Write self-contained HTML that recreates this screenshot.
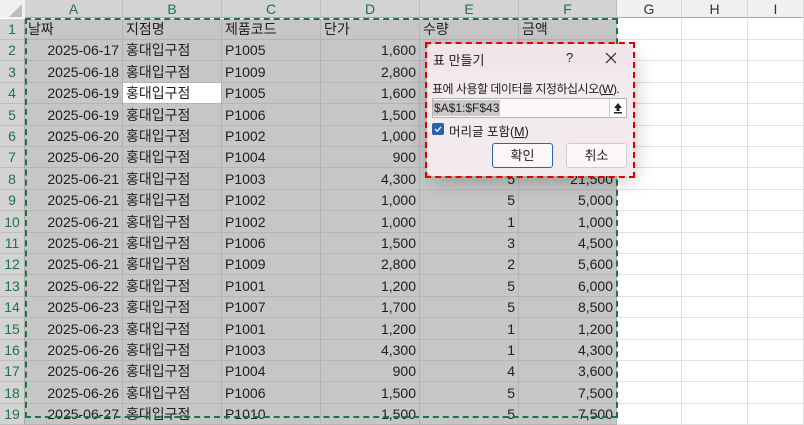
<!DOCTYPE html>
<html><head><meta charset="utf-8"><style>
*{margin:0;padding:0;box-sizing:border-box}
body{width:804px;height:413px;overflow:hidden;background:#fff;font-family:"Liberation Sans","Noto Sans CJK KR",sans-serif;font-size:14px;color:#1e1e1e;position:relative}
.c{position:absolute;white-space:nowrap;overflow:hidden;line-height:22px;padding:0 3px}
</style></head><body>
<div id="g"></div>
<div style="position:absolute;left:25px;top:18px;width:593px;height:400px;border:2px dashed #217346;"></div>
<div style="position:absolute;left:0;top:0;width:25px;height:18px;background:#f0f0f0"></div>
<svg style="position:absolute;left:6px;top:3px" width="18" height="15"><polygon points="16,1 16,14 3,14" fill="#bdbdbd"/></svg>

<div style="position:absolute;left:433px;top:50px;width:199px;height:122px;box-shadow:0 6px 22px rgba(0,0,0,.3);"></div>
<div style="position:absolute;left:425px;top:42px;width:210px;height:136px;border:2px dashed #e00000;"></div>
<div style="position:absolute;left:427px;top:44px;width:206px;height:132px;background:#f3eaed;border-radius:6px;overflow:hidden">
 <div style="position:absolute;left:0;top:0;width:206px;height:27px;background:#f1e4ea"></div>
 <div style="position:absolute;left:6px;top:6px;font-size:13px">표 만들기</div>
 <div style="position:absolute;left:139px;top:6px;font-size:13px">?</div>
 <svg style="position:absolute;left:178px;top:8px" width="12" height="12"><path d="M1 1L11 11M11 1L1 11" stroke="#222" stroke-width="1.2"/></svg>
 <div style="position:absolute;left:5px;top:36px;font-size:12px;letter-spacing:-.5px;white-space:nowrap">표에 사용할 데이터를 지정하십시오(<u>W</u>).</div>
 <div style="position:absolute;left:5px;top:54px;width:195px;height:20px;background:#fdf8f9;border:1px solid #b9b0b3"></div>
 <div style="position:absolute;left:6px;top:56px;height:16px;background:#c8c8c8;font-size:12px;line-height:16px;padding:0 1px;color:#222">$A$1:$F$43</div>
 <div style="position:absolute;left:182px;top:55px;width:17px;height:18px;background:#fff;border-left:1px solid #ccc"></div>
 <svg style="position:absolute;left:186px;top:58px" width="10" height="12"><path d="M5 1L1 6H3.5V9H6.5V6H9Z" fill="#222"/><rect x="1" y="10" width="8" height="1.5" fill="#222"/></svg>
 <div style="position:absolute;left:5px;top:79px;width:12px;height:12px;background:#2b5fb4;border-radius:2px"></div>
 <svg style="position:absolute;left:6px;top:80px" width="10" height="10"><path d="M2 5L4.2 7.3L8 2.8" stroke="#fff" stroke-width="1.3" fill="none"/></svg>
 <div style="position:absolute;left:22px;top:77px;font-size:12.5px">머리글 포함(<u>M</u>)</div>
 <div style="position:absolute;left:65px;top:99px;width:61px;height:25px;background:#fbf6f8;border:1px solid #2c62b8;border-radius:3px;text-align:center;line-height:23px;font-size:13px">확인</div>
 <div style="position:absolute;left:139px;top:99px;width:61px;height:25px;background:#fbf6f8;border:1px solid #d4cdd0;border-radius:3px;text-align:center;line-height:23px;font-size:13px">취소</div>
</div>

<script>
var g=document.getElementById('g');var h='';
var cx=[25,123,222,321,420,519,617,682,748,804];
var L='ABCDEFGHI';
for(var i=0;i<9;i++){var sel=i<6;h+='<div class="c" style="left:'+cx[i]+'px;top:0;width:'+(cx[i+1]-cx[i])+'px;height:18px;line-height:18px;text-align:center;background:'+(sel?'#d3d3d3':'#f0f0f0')+';color:'+(sel?'#217346':'#333')+';border-right:1px solid '+(sel?'#bdbdbd':'#d8d8d8')+';border-bottom:1px solid #aaa">'+L[i]+'</div>';}
var d=[["날짜","지점명","제품코드","단가","수량","금액"],
["2025-06-17","1005","1,600","4","6,400"],["2025-06-18","1009","2,800","1","2,800"],["2025-06-19","1005","1,600","2","3,200"],["2025-06-19","1006","1,500","3","4,500"],["2025-06-20","1002","1,000","2","2,000"],["2025-06-20","1004","900","3","2,700"],["2025-06-21","1003","4,300","5","21,500"],["2025-06-21","1002","1,000","5","5,000"],["2025-06-21","1002","1,000","1","1,000"],["2025-06-21","1006","1,500","3","4,500"],["2025-06-21","1009","2,800","2","5,600"],["2025-06-22","1001","1,200","5","6,000"],["2025-06-23","1007","1,700","5","8,500"],["2025-06-23","1001","1,200","1","1,200"],["2025-06-26","1003","4,300","1","4,300"],["2025-06-26","1004","900","4","3,600"],["2025-06-26","1006","1,500","5","7,500"],["2025-06-27","1010","1,500","5","7,500"]];
var rh=21.4,y0=18.5;
for(var r=0;r<19;r++){var y=Math.round(y0+r*rh),y2=Math.round(y0+(r+1)*rh),hh=y2-y;
h+='<div class="c" style="left:0;top:'+y+'px;width:25px;height:'+hh+'px;line-height:'+hh+'px;text-align:center;background:#d3d3d3;color:#217346;border-right:1px solid #aaa;border-bottom:1px solid #bdbdbd;padding:0">'+(r+1)+'</div>';
var row=d[r],vals;
if(r==0)vals=row;else vals=[row[0],"홍대입구점","P"+row[1],row[2],row[3],row[4]];
for(var c=0;c<9;c++){var w=cx[c+1]-cx[c];var sel=c<6;var bg=sel?'#c6c6c6':'#fff';if(r==3&&c==1)bg='#fff';
var t=c<6?vals[c]:'';var al=(r>0&&(c==0||c>=3))?'right':'left';
h+='<div class="c" style="left:'+cx[c]+'px;top:'+y+'px;width:'+w+'px;height:'+hh+'px;line-height:'+hh+'px;background:'+bg+';border-right:1px solid '+(sel?'#b4b4b4':'#e1e1e1')+';border-bottom:1px solid '+(sel?'#b4b4b4':'#e1e1e1')+';text-align:'+al+'">'+t+'</div>';}
}
g.innerHTML=h;
</script>
</body></html>
